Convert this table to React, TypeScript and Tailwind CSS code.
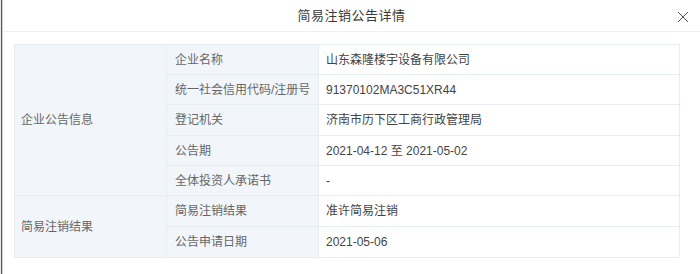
import React from "react";

const rows = [
  { label: "企业名称", value: "山东森隆楼宇设备有限公司" },
  { label: "统一社会信用代码/注册号", value: "91370102MA3C51XR44" },
  { label: "登记机关", value: "济南市历下区工商行政管理局" },
  { label: "公告期", value: "2021-04-12 至 2021-05-02" },
  { label: "全体投资人承诺书", value: "-" },
  { label: "简易注销结果", value: "准许简易注销" },
  { label: "公告申请日期", value: "2021-05-06" },
];

const App: React.FC = () => {
  return (
    <div
      className="w-[700px] h-[274px] bg-white flex overflow-hidden"
      style={{ fontFamily: '"Liberation Sans", "Noto Sans CJK SC", sans-serif' }}
    >
      {/* left edge of the page behind the dialog */}
      <div className="w-[3px] flex">
        <div className="w-px bg-[#e5e5e5]" />
        <div className="w-px bg-[#5a5a5a]" />
        <div className="w-px bg-[#d0d0d0]" />
      </div>

      <div className="flex-1 flex flex-col">
        {/* Header */}
        <header className="h-[32px] border-b border-[#eef0f3] flex items-center justify-center relative">
          <span className="text-[13px] text-[#3a3a3a] tracking-[0.5px]">简易注销公告详情</span>
          <button type="button" className="absolute right-[11px] top-[11px] w-[12px] h-[12px] text-[#555]">
            <svg viewBox="0 0 12 12" width="12" height="12" fill="none" stroke="currentColor" strokeWidth="1">
              <path d="M1 1L11 11M11 1L1 11" />
            </svg>
          </button>
        </header>

        {/* Table */}
        <div className="ml-[11px] mr-[20px] mt-[12px] bg-[#e6edf5] p-px grid gap-px grid-cols-[151px_151px_1fr] grid-rows-[29px_29px_30px_29px_29px_30px_30px] text-[12px]">
          <div className="row-span-5 col-start-1 row-start-1 bg-[#f2f6fb] text-[#666] flex items-center pl-[6px]">
            企业公告信息
          </div>
          <div className="row-span-2 col-start-1 row-start-6 bg-[#f2f6fb] text-[#666] flex items-center pl-[6px]">
            简易注销结果
          </div>
          {rows.map((r) => (
            <React.Fragment key={r.label}>
              <div className="col-start-2 bg-[#f2f6fb] text-[#666] flex items-center pl-[8px]">{r.label}</div>
              <div className="col-start-3 bg-white text-[#444] flex items-center pl-[7px]">{r.value}</div>
            </React.Fragment>
          ))}
        </div>
      </div>
    </div>
  );
};

export default App;
